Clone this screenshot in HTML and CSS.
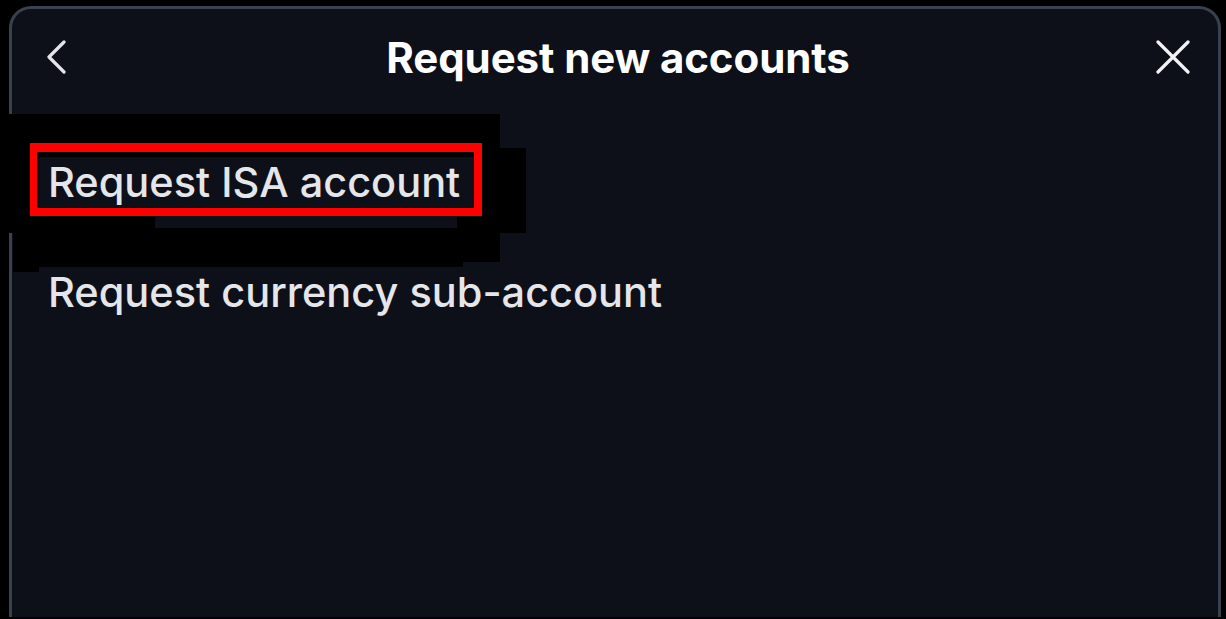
FILE: index.html
```html
<!DOCTYPE html>
<html lang="en">
<head>
    <meta charset="UTF-8">
    <meta name="viewport" content="width=device-width, initial-scale=1.0">
    <title>Request new accounts</title>
    <link rel="stylesheet" href="styles.css">
</head>
<body>
    <div class="modal">
        <div class="modal-header">
            <button class="icon-btn back" aria-label="Back">
                <svg width="22" height="34" viewBox="0 0 22 34" fill="none">
                    <path d="M18 2 L3 17 L18 32" stroke="#e3e5e9" stroke-width="3.2" stroke-linecap="round" stroke-linejoin="round"/>
                </svg>
            </button>
            <h1>Request new accounts</h1>
            <button class="icon-btn close" aria-label="Close">
                <svg width="34" height="34" viewBox="0 0 34 34" fill="none">
                    <path d="M2 2 L32 32 M32 2 L2 32" stroke="#f2f3f5" stroke-width="3.2" stroke-linecap="round"/>
                </svg>
            </button>
        </div>

        <ul class="account-list">
            <li class="account-item"><span class="item-label">Request ISA account</span></li>
            <li class="account-item"><span class="item-label">Request currency sub-account</span></li>
        </ul>
    </div>

    <!-- redaction blocks and annotation from the captured screenshot -->
    <div class="redact r1"></div>
    <div class="redact r2"></div>
    <div class="redact r3"></div>
    <div class="redact r4"></div>
    <div class="gap-strip"></div>
    <div class="mark"></div>
</body>
</html>
```

FILE: styles.css
```css
* {
    box-sizing: border-box;
}
html, body {
    height: 100%;
}
body {
    margin: 0;
    padding: 6px 5px 2px 9px;
    background: #000;
    font-family: Inter, "Noto Sans", sans-serif;
    overflow: hidden;
}
.modal {
    height: 611px;
    background: #0d1018;
    border: 3px solid #394150;
    border-bottom: none;
    border-radius: 22px 22px 0 0;
}
.modal-header {
    height: 96px;
    display: flex;
    align-items: center;
    justify-content: space-between;
    padding: 0 28px 0 34px;
}
.modal-header h1 {
    margin: 0;
    font-size: 42px;
    font-weight: 700;
    color: #fff;
    letter-spacing: -0.1px;
}
.icon-btn {
    background: none;
    border: none;
    padding: 0;
    width: 34px;
    display: flex;
    align-items: center;
    cursor: pointer;
}
.icon-btn.close {
    justify-content: flex-end;
}
.account-list {
    list-style: none;
    margin: 0;
    padding: 22px 0 0 36px;
}
.account-item {
    height: 110px;
    display: flex;
    align-items: center;
}
.item-label {
    position: relative;
    z-index: 2;
    display: inline-block;
    height: 50px;
    line-height: 50px;
    margin-left: -9px;
    padding: 0 14px 0 9px;
    font-size: 41.5px;
    font-weight: 500;
    color: #e4e6ea;
    background: #0d1018;
}

/* overlays */
.redact {
    position: absolute;
    z-index: 1;
    background: #000;
}
.r1 { left: 0; top: 114px; width: 500px; height: 34px; }
.r2 { left: 0; top: 148px; width: 526px; height: 85px; }
.r3 { left: 13px; top: 233px; width: 487px; height: 29px; }
.r4 { left: 13px; top: 262px; width: 450px; height: 10px; }
.gap-strip {
    position: absolute;
    z-index: 2;
    left: 155px;
    top: 216px;
    width: 302px;
    height: 12px;
    background: #0d1018;
}
.mark {
    position: absolute;
    z-index: 3;
    left: 30px;
    top: 143px;
    width: 452px;
    height: 73px;
    border: solid #ff0000;
    border-width: 9px 8px 8px 7px;
}
```
